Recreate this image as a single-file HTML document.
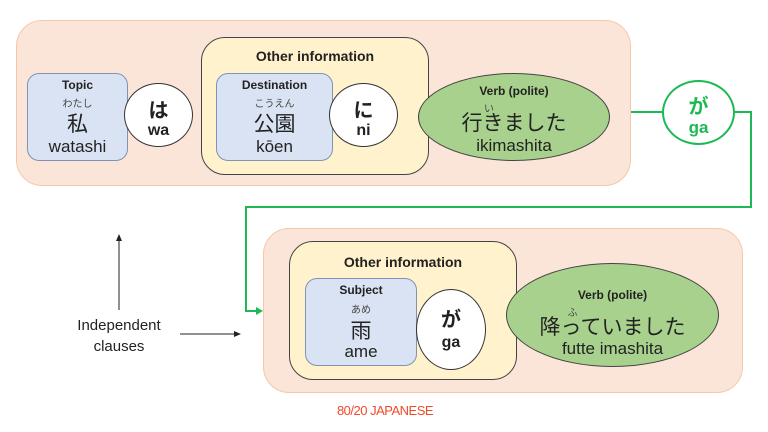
<!DOCTYPE html>
<html><head><meta charset="utf-8"><style>
body{margin:0;width:768px;height:432px;background:#fff;position:relative;overflow:hidden;font-family:"Liberation Sans","Noto Sans CJK JP",sans-serif;color:#222}
.a{position:absolute;box-sizing:border-box}
.outer{background:#fbe5d8;border:1px solid #f4c9ab;border-radius:26px}
.oi{background:#fff2cc;border:1px solid #444;border-radius:24px}
.bl{background:#dae3f3;border:1px solid #7f93b5;border-radius:12px;text-align:center}
.c{background:#fff;border:1px solid #333;border-radius:50%;text-align:center;font-weight:bold}
.v{background:#a9d18e;border:1px solid #444;border-radius:50%;text-align:center}
.t{position:absolute;left:0;right:0;text-align:center;white-space:nowrap}
.b{font-weight:bold;font-size:13px}
.f{font-size:10px;color:#444}
.k{font-size:21px}
.r{font-size:17px}
</style></head><body>
<div class="a outer" style="left:16px;top:20px;width:615px;height:166px"></div>
<div class="a oi" style="left:201px;top:37px;width:228px;height:138px"><div class="t b" style="top:10px;font-size:14px">Other information</div></div>
<div class="a bl" style="left:27px;top:73px;width:101px;height:88px">
<div class="t b" style="top:4px;font-size:12px">Topic</div><div class="t f" style="top:21px">わたし</div><div class="t k" style="top:34px">私</div><div class="t r" style="top:63px">watashi</div></div>
<div class="a c" style="left:124px;top:83px;width:69px;height:64px"><div class="t" style="top:10px;font-size:20px">は</div><div class="t" style="top:38px;font-size:16px">wa</div></div>
<div class="a bl" style="left:216px;top:73px;width:117px;height:88px">
<div class="t b" style="top:4px;font-size:12px">Destination</div><div class="t f" style="top:21px">こうえん</div><div class="t k" style="top:34px">公園</div><div class="t r" style="top:63px">kōen</div></div>
<div class="a c" style="left:329px;top:83px;width:69px;height:64px"><div class="t" style="top:10px;font-size:20px">に</div><div class="t" style="top:38px;font-size:16px">ni</div></div>
<div class="a v" style="left:418px;top:73px;width:192px;height:88px">
<div class="t b" style="top:10px;font-size:12px">Verb (polite)</div><div class="t f" style="top:26px;left:-50px">い</div><div class="t k" style="top:33px">行きました</div><div class="t r" style="top:62px">ikimashita</div></div>

<svg class="a" style="left:0;top:0" width="768" height="432">
<polyline points="631,112 662,112" stroke="#1db954" stroke-width="2" fill="none"/>
<polyline points="735,112 751,112 751,207 246,207 246,311 258,311" stroke="#1db954" stroke-width="2" fill="none"/>
<polygon points="263,311 256,307 256,315" fill="#1db954"/>
<line x1="119" y1="310" x2="119" y2="240" stroke="#222" stroke-width="1"/>
<polygon points="119,234 116,241 122,241" fill="#222"/>
<line x1="180" y1="334" x2="236" y2="334" stroke="#222" stroke-width="1"/>
<polygon points="241,334 234,331 234,337" fill="#222"/>
</svg>
<div class="a" style="left:662px;top:80px;width:73px;height:65px;border:2px solid #1db954;border-radius:50%;background:#fff;color:#1db954;font-weight:bold;text-align:center"><div class="t" style="top:8px;font-size:20px">が</div><div class="t" style="top:36px;font-size:17px">ga</div></div>

<div class="a outer" style="left:263px;top:228px;width:480px;height:165px"></div>
<div class="a oi" style="left:289px;top:241px;width:228px;height:139px"><div class="t b" style="top:12px;font-size:14px">Other information</div></div>
<div class="a bl" style="left:305px;top:278px;width:112px;height:88px">
<div class="t b" style="top:4px;font-size:12px">Subject</div><div class="t f" style="top:22px">あめ</div><div class="t k" style="top:36px">雨</div><div class="t r" style="top:63px">ame</div></div>
<div class="a c" style="left:416px;top:289px;width:70px;height:81px"><div class="t" style="top:13px;font-size:20px">が</div><div class="t" style="top:44px;font-size:16px">ga</div></div>
<div class="a v" style="left:506px;top:263px;width:213px;height:104px">
<div class="t b" style="top:24px;font-size:12px">Verb (polite)</div><div class="t f" style="top:40px;left:-80px">ふ</div><div class="t k" style="top:47px">降っていました</div><div class="t r" style="top:75px">futte imashita</div></div>

<div class="a" style="left:60px;top:315px;width:118px;text-align:center;font-size:15px;line-height:21px">Independent<br>clauses</div>
<div class="a" style="left:320px;top:403px;width:130px;text-align:center;color:#f04a2a;font-size:13px;letter-spacing:-0.5px">80/20 JAPANESE</div>
</body></html>
